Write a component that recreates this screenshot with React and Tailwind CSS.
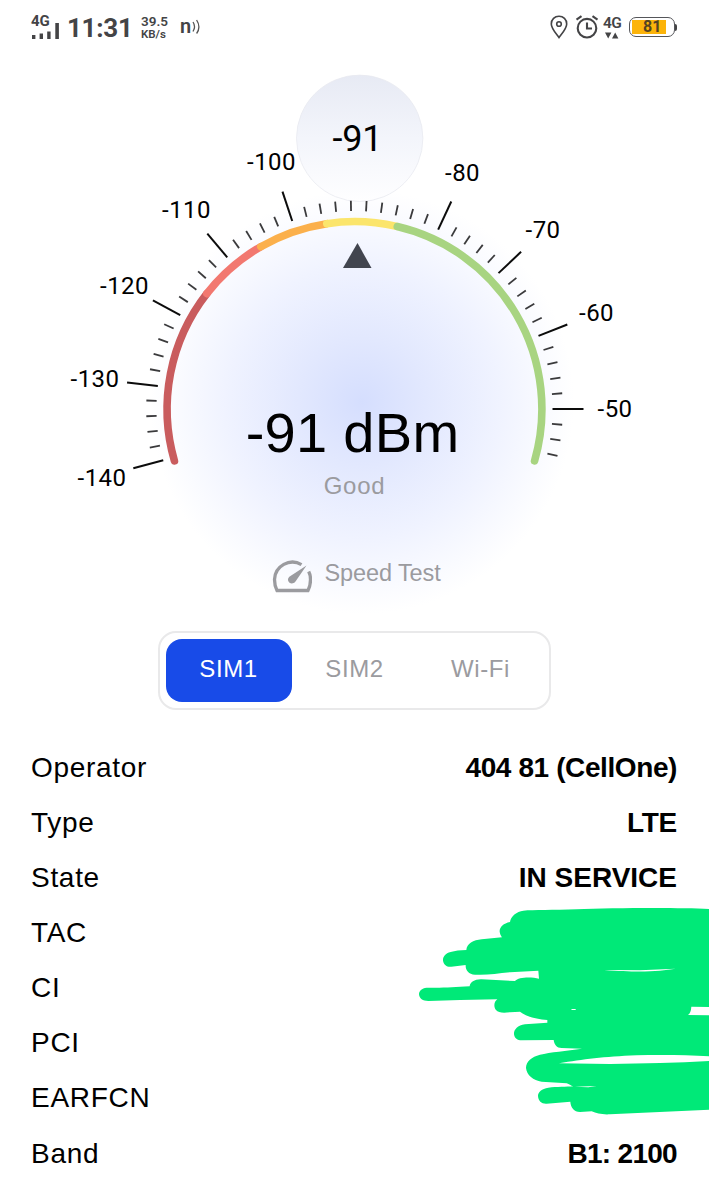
import { useState } from "react";

const CX = 354.5;
const CY = 409;
const RADIUS = 187.4;
const DEG_PER_DBM = 195 / 90;

const arcs = [
  { from: 196.1, to: 142, color: "#c95c5e" },
  { from: 142, to: 120, color: "#f27870" },
  { from: 120, to: 98.5, color: "#fbb04c" },
  { from: 98.5, to: 77, color: "#fbe56c" },
  { from: 76.8, to: -16.1, color: "#a8d481" },
];

const labels = [
  { text: "-140", x: 77.5, y: 485.5 },
  { text: "-130", x: 70.5, y: 387 },
  { text: "-120", x: 100, y: 294 },
  { text: "-110", x: 162, y: 217.5 },
  { text: "-100", x: 247, y: 170 },
  { text: "-80", x: 445, y: 181 },
  { text: "-70", x: 525.5, y: 238 },
  { text: "-60", x: 579, y: 321 },
  { text: "-50", x: 597.5, y: 416.5 },
];

const rows = [
  { label: "Operator", value: "404 81 (CellOne)", spacing: "tracking-[-0.4px]" },
  { label: "Type", value: "LTE", spacing: "tracking-[-0.3px]" },
  { label: "State", value: "IN SERVICE" },
  { label: "TAC" },
  { label: "CI" },
  { label: "PCI" },
  { label: "EARFCN" },
  { label: "Band", value: "B1: 2100", spacing: "tracking-[-0.7px]" },
];

function polar(r, deg) {
  const a = (deg * Math.PI) / 180;
  return [CX + r * Math.cos(a), CY - r * Math.sin(a)];
}

function arcPath(from, to) {
  const [x1, y1] = polar(RADIUS, from);
  const [x2, y2] = polar(RADIUS, to);
  return `M${x1} ${y1}A${RADIUS} ${RADIUS} 0 0 1 ${x2} ${y2}`;
}

// One tick every 2 dBm, a long one every 10
function Ticks() {
  const ticks = [];
  for (let dbm = -140; dbm <= -44; dbm += 2) {
    const major = dbm % 10 === 0 && dbm !== -90;
    const deg = (-50 - dbm) * DEG_PER_DBM;
    const [x1, y1] = polar(198, deg);
    const [x2, y2] = polar(major ? 229 : 208.3, deg);
    ticks.push(
      <line
        key={dbm}
        x1={x1}
        y1={y1}
        x2={x2}
        y2={y2}
        stroke={major ? "#0c0c0c" : "#3a3a3c"}
        strokeWidth={major ? 2 : 1.8}
      />,
    );
  }
  return <g>{ticks}</g>;
}

function Gauge() {
  return (
    <svg
      viewBox="0 56 709 575"
      className="col-start-1 row-start-1 w-[709px] h-[575px]"
    >
      <defs>
        <radialGradient id="glow">
          <stop offset="0" stopColor="#d5defe" />
          <stop offset="0.3" stopColor="#e2e8fe" />
          <stop offset="0.65" stopColor="#f0f3ff" />
          <stop offset="0.88" stopColor="#fafbff" />
          <stop offset="1" stopColor="#ffffff" />
        </radialGradient>
        <linearGradient id="bubble" x1="0" y1="0" x2="0" y2="1">
          <stop offset="0" stopColor="#e7eaf4" />
          <stop offset="0.5" stopColor="#f3f5fb" />
          <stop offset="1" stopColor="#fefeff" />
        </linearGradient>
      </defs>

      <circle cx="362" cy="402" r="212" fill="url(#glow)" />
      <circle
        cx="359.7"
        cy="138.3"
        r="63.2"
        fill="url(#bubble)"
        stroke="#e9eaf0"
        strokeWidth="0.8"
      />
      <text
        x="332.5"
        y="150.5"
        fontSize="36"
        letterSpacing="-0.2"
        className="font-[Roboto,sans-serif]"
      >
        -91
      </text>

      {arcs.map((arc) => (
        <path
          key={arc.color}
          d={arcPath(arc.from, arc.to)}
          fill="none"
          stroke={arc.color}
          strokeWidth="7.6"
          strokeLinecap="round"
        />
      ))}
      <Ticks />

      <g fontSize="24" letterSpacing="0.5" className="font-[Roboto,sans-serif]">
        {labels.map((l) => (
          <text key={l.text} x={l.x} y={l.y}>
            {l.text}
          </text>
        ))}
      </g>
      <path d="M357.5 243L371.5 268H343z" fill="#42454f" />
    </svg>
  );
}

function StatusBar() {
  return (
    <div className="flex h-14 justify-between pl-[31px] pr-8 pt-[13px] font-[Roboto,sans-serif] text-[#444446]">
      <div className="flex h-7">
        <div className="w-[29px]">
          <div className="text-[15px] leading-[16px] font-bold">4G</div>
          <svg viewBox="0 0 29 17" className="-mt-[7px] w-[29px] h-[17px]">
            <path
              d="M1 13h3.400v4H1zM8.600 11.500h3.400V17H8.600zM16.200 9.500h3.400V17h-3.400zM24.300 1h3.600v16h-3.600z"
              fill="#444446"
            />
          </svg>
        </div>
        <div className="ml-[7px] w-[74px] text-[26px] leading-[31px] tracking-[-0.3px] font-bold">
          11:31
        </div>
        <div className="w-[39px] font-semibold">
          <div className="mt-px text-[13.500px] leading-[15px]">39.5</div>
          <div className="text-[11.500px] leading-[10px]">KB/s</div>
        </div>
        <div className="text-[20px] leading-[27px] font-semibold">n</div>
        <svg viewBox="0 0 10 16" className="ml-px mt-1.5 w-[10px] h-4">
          <path
            d="M1 3q3 4.500 0 9.500M4.600 1q4.600 7 0 13.500"
            fill="none"
            stroke="#555"
            strokeWidth="1.3"
          />
        </svg>
      </div>

      <div className="flex h-7">
        <svg viewBox="0 0 18 24" className="mt-0.5 w-[18px] h-6">
          <path
            d="M9 1.2a7.6 7.6 0 0 0-7.7 7.7c0 4.6 4.7 9.3 7.7 13.6 3-4.3 7.7-9 7.7-13.6A7.6 7.6 0 0 0 9 1.2z"
            fill="none"
            stroke="#444446"
            strokeWidth="1.6"
          />
          <circle
            cx="9"
            cy="9"
            r="2.3"
            fill="none"
            stroke="#444446"
            strokeWidth="1.6"
          />
        </svg>
        <svg viewBox="0 0 24 24" className="ml-[7px] mt-0.5 w-6 h-6">
          <g fill="none" stroke="#444446" strokeWidth="2.1">
            <circle cx="12" cy="13.2" r="9.3" />
            <path d="M12 7.5v6h5M1.500 4.600L6.500 1.200M22.500 4.600L17.500 1.200" />
          </g>
        </svg>
        <div className="ml-[4px] w-[26px]">
          <div className="mt-[2px] text-[15.500px] leading-[16px] font-semibold tracking-[-0.5px]">
            4G
          </div>
          <svg viewBox="0 0 14 7" className="ml-0.5 mt-px w-3.5 h-[7px]">
            <path d="M0 .5h6.4L3.2 6.500zM7 6.500h6.400L10.200.5z" fill="#444446" />
          </svg>
        </div>
        <div className="mt-[4px] h-[20px] w-[46px] rounded-[7px] border border-[#55565a] p-[2px]">
          <div className="h-full w-[34px] bg-[#fcb40a] pl-[11px] text-[16px] leading-[14px] font-bold text-[#554322]">
            81
          </div>
        </div>
        <div className="mt-[11px] h-[7px] w-0.5 rounded-r bg-[#444446]" />
      </div>
    </div>
  );
}

function SpeedIcon() {
  return (
    <svg viewBox="0 0 40 33" className="w-10 h-[33px]">
      <path
        d="M29.500 4.600A18 18 0 0 0 2.500 19.500c0 4 .8 7.700 2.500 11h31c1.600-3 2.500-7 2.500-11 0-3-.6-5.700-1.800-8"
        fill="none"
        stroke="#9b9b9f"
        strokeWidth="3.300"
      />
      <path
        d="M34.500 5.500L23.500 21.500a4.300 4.300 0 0 1-6 1.200 4.300 4.300 0 0 1-.2-6z"
        fill="#9b9b9f"
      />
    </svg>
  );
}

// Marker strokes hiding the cell identifiers
function Redaction() {
  return (
    <svg
      viewBox="0 0 897 720"
      className="absolute right-0 top-[150px] w-[299px] h-[240px]"
    >
      <path
        fill="#00e978"
        d="M897 57C800 52 600 54 500 58C430 60 370 60 340 62C320 65 302 78 300 96C280 100 268 112 269 125C270 133 273 138 276 142L215 148C190 150 170 162 169 180C150 181 135 182 122 186C105 190 98 202 99 212C102 226 112 232 124 230L167 225C166 240 175 253 195 254C230 256 260 251 300 247L385 242L387 266C365 260 325 260 315 273L215 268C195 267 180 276 179 289C130 292 100 294 50 293C35 294 27 303 27 313C28 326 38 333 55 333L150 330L262 328C252 335 250 350 258 360C265 369 280 369 300 367L330 365C345 377 375 388 412 390L412 398L345 403C322 406 311 420 312 433C314 445 322 451 335 451L431 450C433 464 440 474 455 474L516 476C470 482 420 487 390 494C365 500 348 515 348 534C350 555 370 572 395 575L470 580C478 583 482 587 490 589C470 591 440 590 415 593C395 596 384 606 384 618C385 633 395 642 410 641L481 635C482 652 492 666 510 666L545 664C560 671 575 674 600 673L897 659Z"
      />
      <path
        fill="#fff"
        d="M834 375Q843 368 844 350L897 351V376ZM447 520C520 508 580 500 680 496C750 494 830 495 897 499V513C800 519 700 520 600 522ZM583 240L690 241L797 236C750 243 700 249 583 240ZM483 357H497V360H486ZM495 590L560 588L535 592Z"
      />
    </svg>
  );
}

function App() {
  const [tab, setTab] = useState("SIM1");

  return (
    <div className="w-[709px] h-[1199px] overflow-hidden bg-white font-['Liberation_Sans',Arial,sans-serif] text-black">
      <StatusBar />

      <div className="grid h-[575px]">
        <Gauge />
        <div className="z-10 col-start-1 row-start-1 flex flex-col items-center pt-[345px]">
          <div className="pr-1 text-[56px] leading-[64px] tracking-[0.3px] whitespace-pre">
            -91 dBm
          </div>
          <div className="mt-[5px] text-[24px] leading-8 tracking-[0.7px] text-[#9b9b9f]">
            Good
          </div>
          <div className="mt-[57px] flex items-center gap-3 pl-1">
            <SpeedIcon />
            <span className="pb-1.5 text-[23.500px] leading-7 tracking-[-0.1px] text-[#9b9b9f]">
              Speed Test
            </span>
          </div>
        </div>
      </div>

      <div className="mx-auto flex h-[79px] w-[393px] rounded-[18px] border-2 border-[#e9e9ea] px-[5.500px] py-[6px]">
        {["SIM1", "SIM2", "Wi-Fi"].map((name) => (
          <button
            key={name}
            onClick={() => setTab(name)}
            className={`h-[63px] w-[126px] rounded-[16px] pb-1 text-[24px] tracking-[0.6px] ${
              tab === name ? "bg-[#184be8] text-white" : "text-[#9b9b9f]"
            }`}
          >
            {name}
          </button>
        ))}
      </div>

      <div className="relative mt-[30px] pl-[31px] pr-8 text-[28px]">
        {rows.map((row) => (
          <div
            key={row.label}
            className="flex h-[55.150px] items-center justify-between"
          >
            <span className="tracking-[0.7px]">{row.label}</span>
            <span className={`font-bold ${row.spacing || ""}`}>
              {row.value}
            </span>
          </div>
        ))}
        <Redaction />
      </div>
    </div>
  );
}

export default App;
